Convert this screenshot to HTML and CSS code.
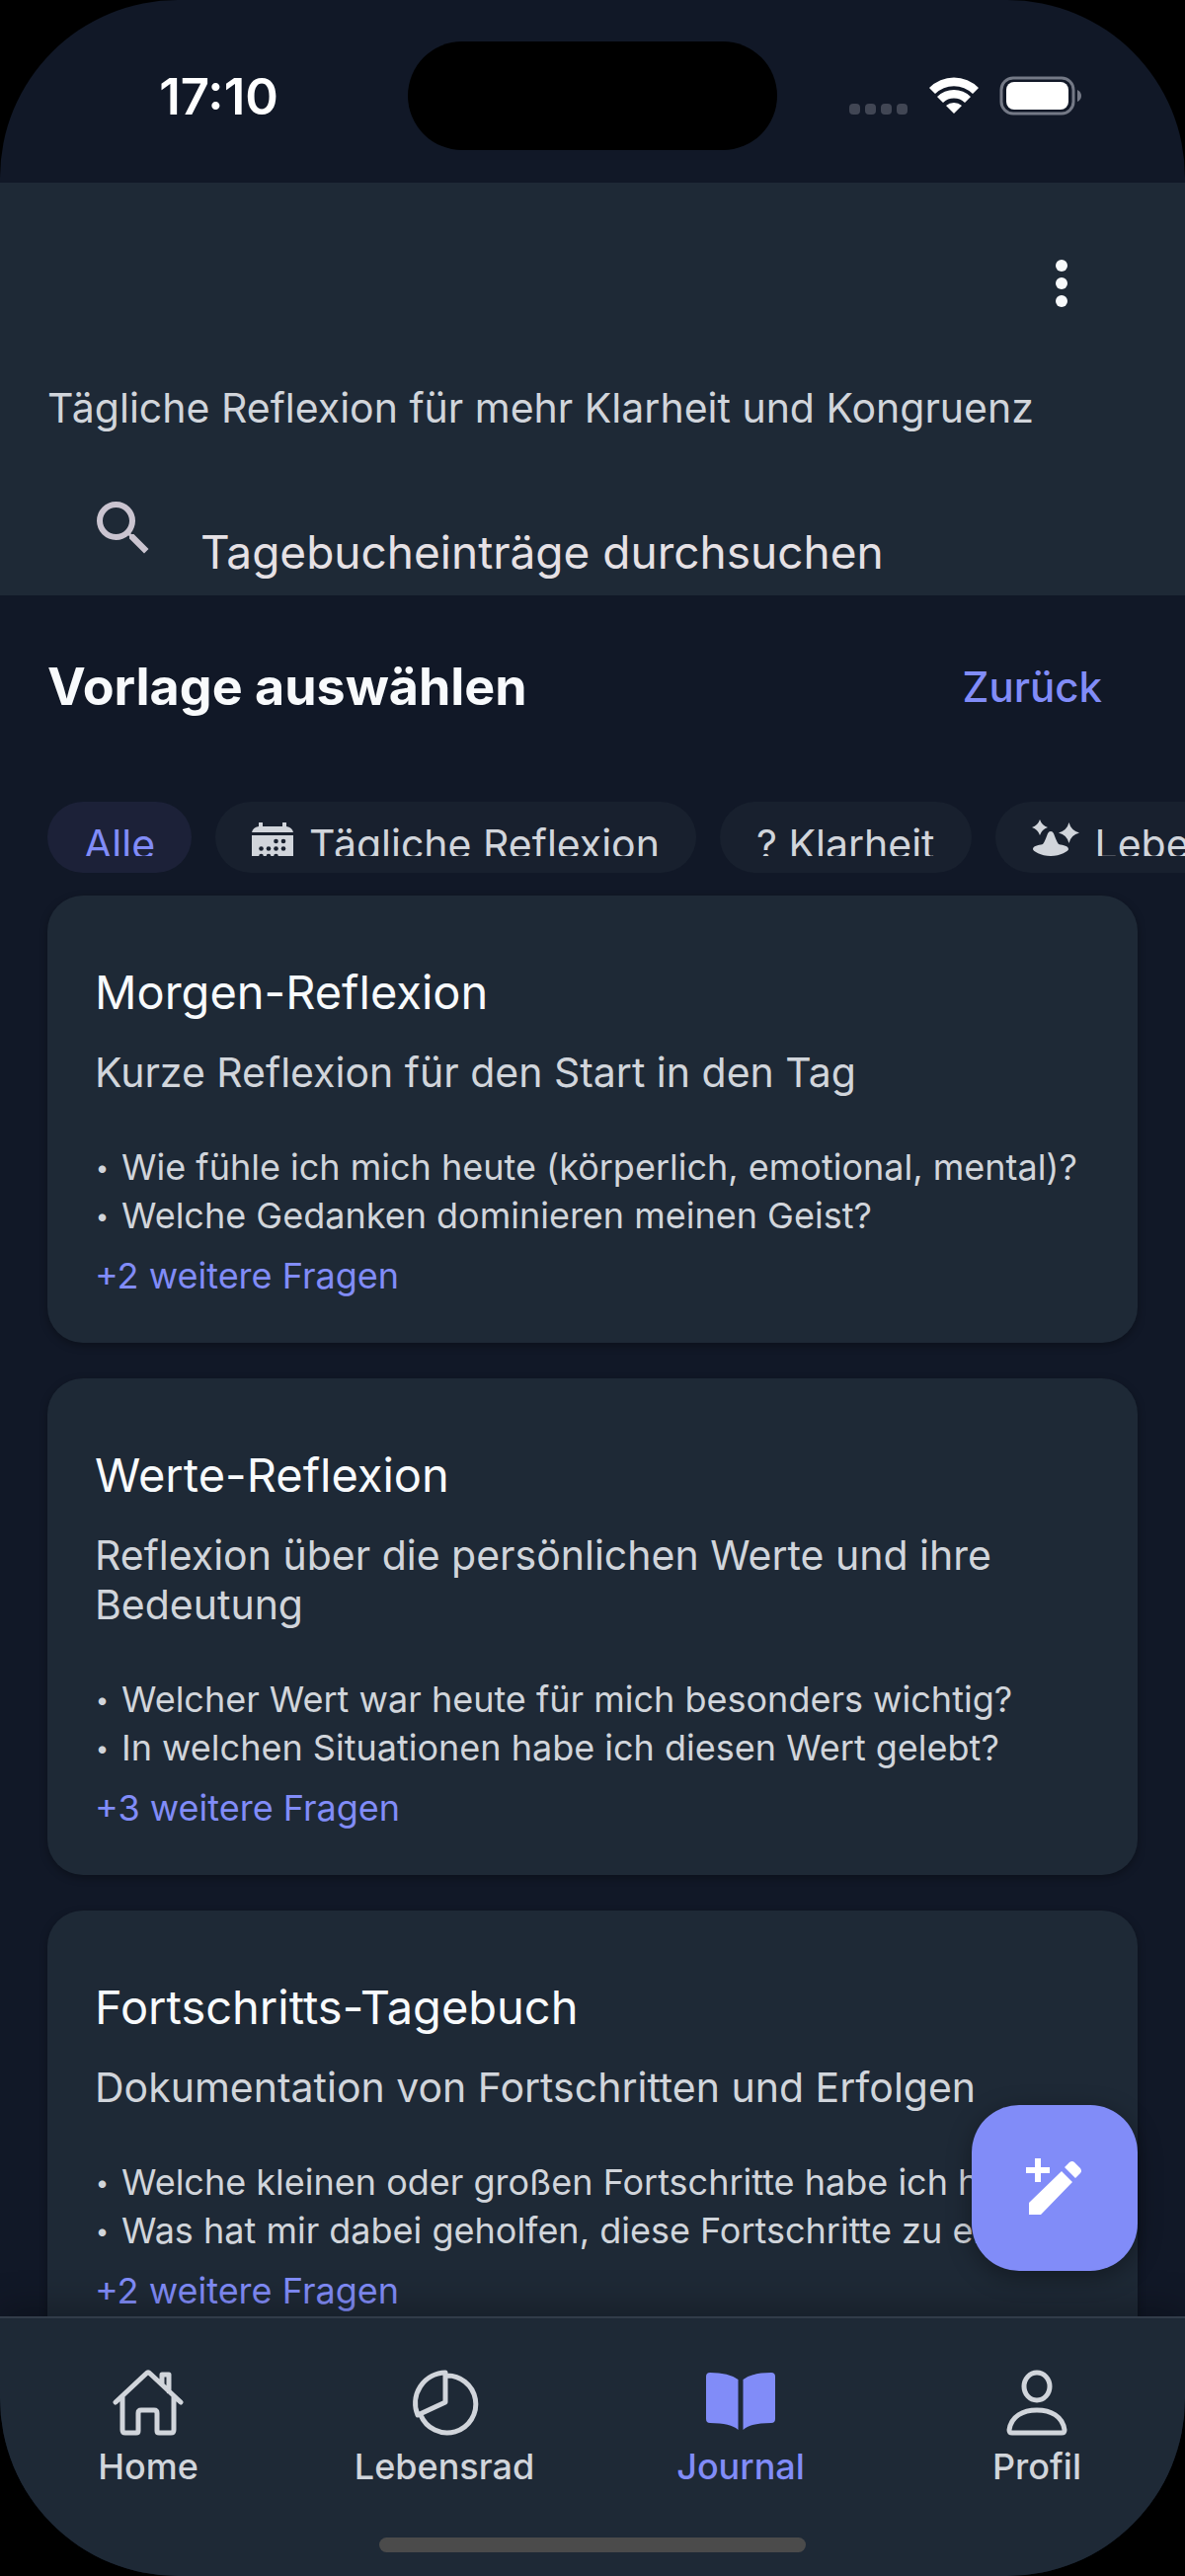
FILE: index.html
```html
<!DOCTYPE html>
<html lang="de">
<head>
<meta charset="utf-8">
<meta name="viewport" content="width=device-width, initial-scale=1">
<title>Journal</title>
<link rel="stylesheet" href="styles.css">
</head>
<body>
<div class="screen">
  <div class="status-bar">
    <time class="clock">17:10</time>
    <div class="island"></div>
    <div class="status-icons">
      <svg class="signal" viewBox="0 0 60 12" aria-hidden="true"><rect x="0" width="11" height="11" rx="4"/><rect x="16" width="11" height="11" rx="4"/><rect x="32" width="11" height="11" rx="4"/><rect x="48" width="11" height="11" rx="4"/></svg>
      <svg class="wifi" viewBox="0 0 52 40" aria-hidden="true"><path d="M1 12A35 35 0 0 1 51 12L45 18A27 27 0 0 0 7 18Z"/><path d="M9 21A24 24 0 0 1 43 21L37 27A16 16 0 0 0 15 27Z"/><path d="M18 30A12 12 0 0 1 34 30L26 38Z"/></svg>
      <svg class="battery" viewBox="0 0 84 40" aria-hidden="true"><rect class="battery-shell" x="2" y="2" width="73" height="36" rx="12"/><rect x="7" y="6" width="63" height="28" rx="8"/><path class="battery-tip" d="M79 14Q83 16 83 20T79 26Z"/></svg>
    </div>
  </div>

  <header class="header">
    <button class="menu-button" type="button" aria-label="Menü">
      <svg class="icon" viewBox="0 0 24 24" aria-hidden="true"><circle cx="12" cy="6" r="2"/><circle cx="12" cy="12" r="2"/><circle cx="12" cy="18" r="2"/></svg>
    </button>
    <p class="tagline">Tägliche Reflexion für mehr Klarheit und Kongruenz</p>
    <div class="search">
      <label class="search-label" for="search" aria-label="Suche">
        <svg class="icon" viewBox="0 0 24 24" aria-hidden="true"><path d="M9.5 3A6.5 6.5 0 0 1 16 9.500c0 1.610-.59 3.090-1.560 4.230l.27.27h.79l5 5-1.500 1.500-5-5v-.79l-.27-.27A6.516 6.516 0 0 1 9.500 16 6.500 6.500 0 0 1 3 9.500 6.500 6.500 0 0 1 9.500 3m0 2C7 5 5 7 5 9.500S7 14 9.500 14 14 12 14 9.500 12 5 9.500 5Z"/></svg>
      </label>
      <input class="search-input" id="search" type="text" placeholder="Tagebucheinträge durchsuchen">
    </div>
  </header>

  <main class="content">
    <div class="section-head">
      <h1 class="section-title">Vorlage auswählen</h1>
      <button class="back-button" type="button">Zurück</button>
    </div>

    <div class="chips">
      <button class="chip chip-active" type="button"><span class="chip-label">Alle</span></button>
      <button class="chip" type="button"><span class="chip-label">
        <svg class="chip-icon" viewBox="0 0 42 48" aria-hidden="true"><path d="M7 1a2 2 0 0 1 4 0v3h20V1a2 2 0 0 1 4 0v3q6 1 7 6H0q1-5 7-6ZM0 13h42v24q0 6-6 6H6q-6 0-6-6Z"/><g class="chip-icon-dots"><circle cx="24.500" cy="19" r="2.300"/><circle cx="32" cy="19" r="2.300"/><circle cx="9.500" cy="26.500" r="2.300"/><circle cx="17" cy="26.500" r="2.300"/><circle cx="24.500" cy="26.500" r="2.300"/><circle cx="32" cy="26.500" r="2.300"/><circle cx="9.500" cy="34" r="2.300"/><circle cx="17" cy="34" r="2.300"/><circle cx="24.500" cy="34" r="2.300"/></g></svg>
        Tägliche Reflexion</span></button>
      <button class="chip" type="button"><span class="chip-label">? Klarheit</span></button>
      <button class="chip" type="button"><span class="chip-label">
        <svg class="chip-icon chip-icon-wide" viewBox="0 0 48 48" aria-hidden="true"><path d="M8 0q2 6 8 8-6 2-8 8-2-6-8-8 6-2 8-8ZM37.500 3q2 8 10.500 10.500-8.500 2-10.500 10.500-2-8.500-10.500-10.500 8.500-2.500 10.500-10.500ZM19 12c4 0 4 8 8 13 5 1 10 2 10 5 0 2-8 7-18 7S1 32 1 30c0-3 5-4 10-5 4-5 4-13 8-13Z"/></svg>
        Lebensbereiche</span></button>
    </div>

    <article class="card">
      <h2 class="card-title">Morgen-Reflexion</h2>
      <p class="card-text">Kurze Reflexion für den Start in den Tag</p>
      <ul class="questions">
        <li>Wie fühle ich mich heute (körperlich, emotional, mental)?</li>
        <li>Welche Gedanken dominieren meinen Geist?</li>
      </ul>
      <p class="more">+2 weitere Fragen</p>
    </article>

    <article class="card">
      <h2 class="card-title">Werte-Reflexion</h2>
      <p class="card-text">Reflexion über die persönlichen Werte und ihre Bedeutung</p>
      <ul class="questions">
        <li>Welcher Wert war heute für mich besonders wichtig?</li>
        <li>In welchen Situationen habe ich diesen Wert gelebt?</li>
      </ul>
      <p class="more">+3 weitere Fragen</p>
    </article>

    <article class="card">
      <h2 class="card-title">Fortschritts-Tagebuch</h2>
      <p class="card-text">Dokumentation von Fortschritten und Erfolgen</p>
      <ul class="questions">
        <li>Welche kleinen oder großen Fortschritte habe ich heute gemacht?</li>
        <li>Was hat mir dabei geholfen, diese Fortschritte zu erzielen?</li>
      </ul>
      <p class="more">+2 weitere Fragen</p>
    </article>
  </main>

  <footer class="footer">
    <button class="fab" type="button" aria-label="Neuer Eintrag">
      <svg class="icon" viewBox="0 0 72 72" aria-hidden="true"><path d="M16 6h6v9h9v6h-9v9h-6v-9H7v-6h9ZM10 51 43 19l11 11-32 33H10ZM46 15l5-5q3-2 5 0l6 6q2 3 0 5l-5 5Z"/></svg>
    </button>
    <nav class="tabs">
      <a class="tab" href="#home">
        <svg class="tab-icon" viewBox="0 0 72 72" aria-hidden="true"><path d="M3 35 34 6q2-2 4 0l31 29M10 29v34q0 3 3 3h11q2 0 2-2V46q0-3 3-3h13q3 0 3 3v18q0 2 2 2h12q3 0 3-3V29M50 16V7h7v17"/></svg>
        Home</a>
      <a class="tab" href="#lebensrad">
        <svg class="tab-icon" viewBox="0 0 72 72" aria-hidden="true"><path d="M37 5A31 31 0 0 0 9 48L37 35ZM37 8A29 29 0 1 1 12 48"/></svg>
        Lebensrad</a>
      <a class="tab tab-active" href="#journal" aria-current="page">
        <svg class="tab-icon tab-icon-solid" viewBox="0 0 72 72" aria-hidden="true"><path d="M5 5Q24 5 33.500 12V63Q26 56 5 56 1 56 1 52V9Q1 5 5 5ZM67 5Q48 5 38.500 12V63Q46 56 67 56 71 56 71 52V9Q71 5 67 5Z"/></svg>
        Journal</a>
      <a class="tab" href="#profil">
        <svg class="tab-icon" viewBox="0 0 72 72" aria-hidden="true"><ellipse cx="36" cy="19" rx="13" ry="14"/><path d="M8 63C10 49 22 43 36 43s26 6 28 20q0 3-3 3H11q-3 0-3-3Z"/></svg>
        Profil</a>
    </nav>
    <div class="home-indicator"></div>
  </footer>
</div>
</body>
</html>
```
FILE: styles.css
```css
* { box-sizing: border-box; }

body {
  margin: 0;
  background: #000;
  color: #f8fafc;
  font-family: Inter, "Liberation Sans", sans-serif;
}

h1, h2, p, ul { margin: 0; padding: 0; font-weight: 400; }

button {
  border: 0;
  padding: 0;
  background: none;
  color: inherit;
  font: inherit;
}

.icon { display: block; width: 72px; height: 72px; fill: currentColor; }

.screen {
  display: flex;
  flex-direction: column;
  height: 100vh;
  overflow: hidden;
  border-radius: 180px;
  background: #111827;
}

/* Status bar */
.status-bar {
  display: grid;
  grid-template-columns: 1fr 374px 1fr;
  align-items: center;
  flex: none;
  height: 185px;
  padding-bottom: 8px;
}

.clock {
  justify-self: center;
  padding: 18px 0 0 30px;
  color: #fff;
  font-size: 51px;
  font-weight: 600;
}

.island { height: 110px; margin-top: 16px; border-radius: 55px; background: #000; }

.status-icons {
  display: flex;
  align-items: center;
  justify-content: flex-end;
  gap: 20px;
  padding: 16px 104px 0 0;
  fill: #fff;
}

.signal { width: 60px; height: 12px; margin-top: 28px; fill: #414654; }
.wifi { width: 52px; height: 40px; }
.battery { width: 84px; height: 40px; }
.battery-shell { fill: none; stroke: #747986; stroke-width: 3px; }
.battery-tip { fill: #747986; }

/* Header */
.header {
  display: flex;
  flex-direction: column;
  flex: none;
  padding: 66px 48px 0;
  background: #1e2936;
}

.menu-button { align-self: flex-end; margin-right: 41px; }

.tagline { margin-top: 60px; color: #d1d5db; font-size: 41px; line-height: 60px; }

.search { display: flex; align-items: flex-start; gap: 42px; height: 160px; padding: 56px 0 0 41px; }
.search-label { color: #cac4d0; }

.search-input {
  flex: 1;
  min-width: 0;
  height: 72px;
  margin-top: 24px;
  border: 0;
  padding: 0;
  outline: 0;
  background: none;
  color: #e6e1e5;
  font: 46px Inter, "Liberation Sans", sans-serif;
}

.search-input::placeholder { color: #e6e1e5; opacity: 1; }

/* Content */
.content { flex: 1; min-height: 0; padding: 0 48px; overflow: hidden; }

.section-head { display: flex; align-items: center; justify-content: space-between; padding: 60px 36px 0 0; }
.section-title { font-size: 52px; font-weight: 700; line-height: 66px; }
.back-button { color: #818cf8; font-size: 42px; font-weight: 500; line-height: 66px; }

.chips { display: flex; gap: 24px; margin: 83px -48px 0 0; overflow: hidden; }

.chip {
  display: flex;
  align-items: flex-start;
  flex: none;
  height: 72px;
  border-radius: 36px;
  padding: 16px 37px;
  background: #18202e;
  color: #d1d5db;
}

.chip-active { background: #1c2138; color: #818cf8; }

/* The label is shorter than its line, so the text ends at the label's edge. */
.chip-label {
  display: flex;
  gap: 16px;
  height: 39px;
  overflow: hidden;
  font-size: 41px;
  line-height: 54px;
}

.chip-icon { width: 42px; height: 48px; margin-top: 5px; fill: currentColor; }
.chip-icon-wide { width: 48px; margin-top: 2px; }
.chip-icon-dots { fill: #18202e; }

.card {
  margin-bottom: 36px;
  border-radius: 36px;
  padding: 62px 48px 43px;
  background: #1e2936;
  box-shadow: 0 3px 9px rgba(0, 0, 0, 0.3);
}

.chips + .card { margin-top: 23px; }

.card-title { font-size: 47px; line-height: 72px; }
.card-text { margin-top: 20px; color: #d1d5db; font-size: 41px; line-height: 50px; }
.questions { margin-top: 47px; color: #d1d5db; font-size: 36px; line-height: 49px; list-style: none; }
.questions li { overflow: hidden; text-overflow: ellipsis; white-space: nowrap; }
.questions li::before { content: "•"; display: inline-block; width: 15px; margin-right: 12px; font-size: 24px; line-height: 24px; text-align: center; vertical-align: 4px; }
.more { margin-top: 12px; color: #818cf8; font-size: 36px; line-height: 49px; }

/* Footer */
.footer {
  position: relative;
  flex: none;
  border-top: 2px solid #323c49;
  background: #1e2936;
  box-shadow: 0 -6px 36px rgba(0, 0, 0, 0.3);
}

.fab {
  position: absolute;
  right: 48px;
  bottom: calc(100% + 48px);
  display: grid;
  place-items: center;
  width: 168px;
  height: 168px;
  border-radius: 48px;
  background: #818cf8;
  color: #fff;
  box-shadow: 0 6px 24px rgba(0, 0, 0, 0.35);
}

.tabs { display: grid; grid-template-columns: repeat(4, 1fr); padding-top: 50px; }

.tab {
  display: flex;
  flex-direction: column;
  align-items: center;
  gap: 4px;
  color: #d1d5db;
  font-size: 36px;
  font-weight: 500;
  line-height: 48px;
  text-decoration: none;
}

.tab-active { color: #818cf8; }

.tab-icon { width: 72px; height: 72px; fill: none; stroke: currentColor; stroke-width: 5px; stroke-linejoin: round; stroke-linecap: round; }
.tab-icon-solid { fill: currentColor; stroke: none; }

.home-indicator { width: 36%; height: 15px; margin: 48px auto 24px; border-radius: 8px; background: #4b4b4b; }
```
